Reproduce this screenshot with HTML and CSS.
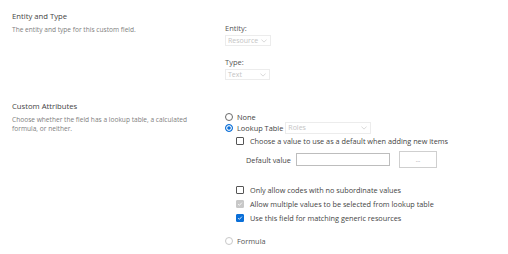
FILE: index.html
```html
<!DOCTYPE html>
<html>
<head>
<meta charset="utf-8">
<link rel="stylesheet" href="styles.css">
</head>
<body>
<div class="page">
  <section class="row row-entity">
    <div class="info">
      <div class="title">Entity and Type</div>
      <div class="desc">The entity and type for this custom field.</div>
    </div>
    <div class="controls">
      <div class="field">
        <div class="label">Entity:</div>
        <div class="select sel-entity"><span>Resource</span><svg class="chev" viewBox="0 0 8 5"><path d="M0.5 0.5 L4 4 L7.5 0.5" fill="none" stroke="#c8c8c8" stroke-width="0.9"/></svg></div>
      </div>
      <div class="field">
        <div class="label">Type:</div>
        <div class="select sel-type"><span>Text</span><svg class="chev" viewBox="0 0 8 5"><path d="M0.5 0.5 L4 4 L7.5 0.5" fill="none" stroke="#c8c8c8" stroke-width="0.9"/></svg></div>
      </div>
    </div>
  </section>
  <section class="row row-custom">
    <div class="info">
      <div class="title">Custom Attributes</div>
      <div class="desc">Choose whether the field has a lookup table, a calculated formula, or neither.</div>
    </div>
    <div class="controls opts">
      <div class="opt"><span class="radio"></span><span class="txt">None</span></div>
      <div class="opt"><span class="radio on"></span><span class="txt">Lookup Table</span>
        <div class="select sel-roles"><span>Roles</span><svg class="chev" viewBox="0 0 8 5"><path d="M0.5 0.5 L4 4 L7.5 0.5" fill="none" stroke="#c8c8c8" stroke-width="0.9"/></svg></div>
      </div>
      <div class="sub">
        <div class="chk-row"><span class="chk"></span><span class="txt">Choose a value to use as a default when adding new items</span></div>
        <div class="default-row">
          <span class="txt dl">Default value</span>
          <span class="input"></span>
          <span class="btn">...</span>
        </div>
        <div class="chk-group">
          <div class="chk-row"><span class="chk"></span><span class="txt">Only allow codes with no subordinate values</span></div>
          <div class="chk-row"><span class="chk dis"><svg viewBox="0 0 8 8"><path d="M1.5 4.2 L3.2 5.8 L6.5 2.2" fill="none" stroke="#fff" stroke-width="1.1"/></svg></span><span class="txt">Allow multiple values to be selected from lookup table</span></div>
          <div class="chk-row"><span class="chk on"><svg viewBox="0 0 8 8"><path d="M1.5 4.2 L3.2 5.8 L6.5 2.2" fill="none" stroke="#fff" stroke-width="1.1"/></svg></span><span class="txt">Use this field for matching generic resources</span></div>
        </div>
      </div>
      <div class="opt formula"><span class="radio dis"></span><span class="txt fdis">Formula</span></div>
    </div>
  </section>
</div>
</body>
</html>
```
FILE: styles.css
```css
* { box-sizing: border-box; }
html, body { margin: 0; padding: 0; background: #fff; }
body { font-family: "Open Sans", "Noto Sans", sans-serif; color: #444; }
.page { padding: 11px 0 0 12px; width: 508px; height: 254px; overflow: hidden; }
.row { display: flex; }
.info { width: 213px; }
.title { font-size: 7.7px; color: #444; line-height: 10px; }
.desc { font-size: 6.6px; color: #808080; line-height: 9px; margin-top: 4px; width: 190px; }
.controls { flex: 1; }
.row-entity .controls { padding-top: 12px; }
.field { margin-bottom: 11px; }
.label { font-size: 7.5px; color: #555; line-height: 10px; }
.select { display: flex; align-items: center; justify-content: space-between; border: 1px solid #ececec; height: 11px; padding: 0 3px 0 2px; font-size: 7px; color: #c4c4c4; margin-top: 2px; }
.chev { width: 6px; height: 4px; }
.sel-entity { width: 46px; }
.sel-type { width: 45px; }
.row-custom { margin-top: 10px; }
.opts { padding-top: 10px; }
.opt { display: flex; align-items: center; height: 11px; font-size: 7.4px; color: #444; }
.radio { width: 8px; height: 8px; border: 1px solid #6a6a6a; border-radius: 50%; margin: 0 4px 0 0; display: inline-block; flex: none; }
.radio.on { border: 1.5px solid #0a6fd8; background: #0a6fd8; box-shadow: inset 0 0 0 1.2px #fff; }
.radio.dis { border-color: #c8c8c8; }
.sel-roles { width: 86px; height: 12px; margin: 0 0 0 2px; }
.sub { padding-left: 11px; margin-top: 1px; }
.chk-row { display: flex; align-items: center; height: 14px; font-size: 7.3px; color: #444; }
.chk { width: 8px; height: 8px; border: 1px solid #555; border-radius: 1px; margin-right: 6px; display: inline-flex; flex: none; }
.chk svg { width: 100%; height: 100%; }
.chk.dis { background: #c8c8c8; border-color: #c8c8c8; }
.chk.on { background: #0a6fd8; border-color: #0a6fd8; }
.default-row { display: flex; align-items: center; padding-left: 10px; margin-top: 3px; font-size: 7.3px; color: #444; }
.dl { width: 50px; }
.input { width: 94px; height: 13px; border: 1px solid #bdbdbd; }
.btn { width: 38px; height: 17px; border: 1px solid #cfcfcf; margin-left: 9px; display: flex; align-items: center; justify-content: center; color: #888; font-size: 6px; }
.chk-group { margin-top: 15px; }
.formula { margin-top: 10px; }
.fdis { color: #555; }
```
